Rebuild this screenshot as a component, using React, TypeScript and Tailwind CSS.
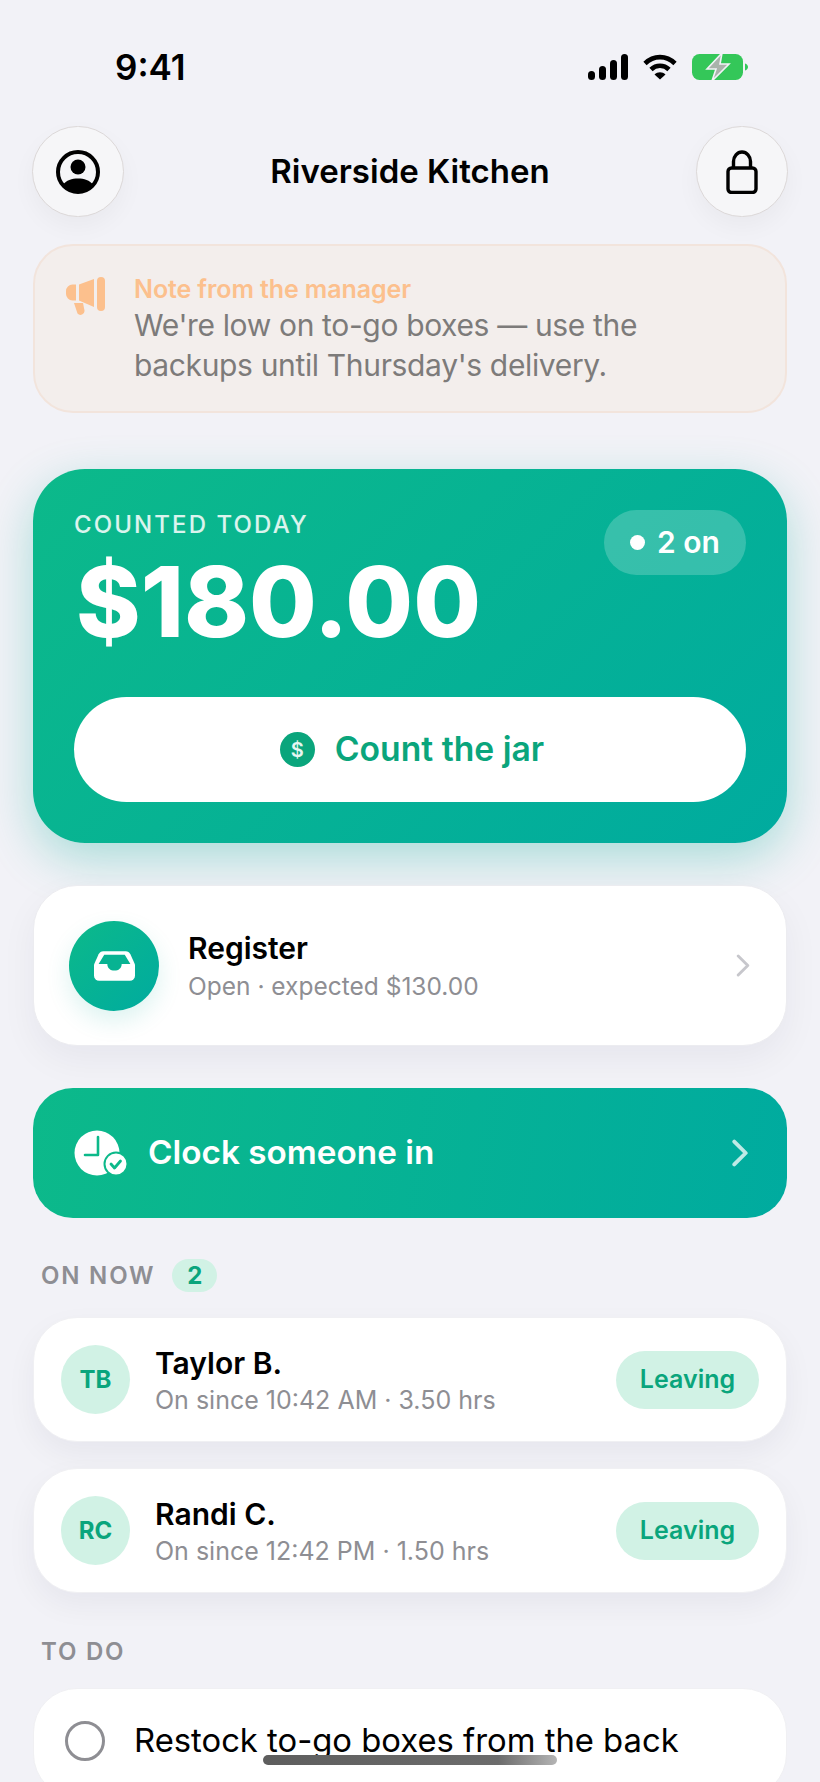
const ink = "#000000";

function SignalIcon() {
  return (
    <svg width="40" height="26" viewBox="0 0 40 26" fill={ink}>
      <rect x="0" y="17" width="7" height="9" rx="3.5" />
      <rect x="11" y="12" width="7" height="14" rx="3.5" />
      <rect x="22" y="6" width="7" height="20" rx="3.5" />
      <rect x="33" y="0" width="7" height="26" rx="3.5" />
    </svg>
  );
}

function WifiIcon() {
  return (
    <svg width="34" height="26" viewBox="0 0 34 26" fill="none" stroke={ink} strokeWidth="4.6">
      <path d="M2 9.5C10.5 1 23.5 1 32 9.5" />
      <path d="M8 15.5C13 10.5 21 10.5 26 15.5" />
      <path d="M17 25.5 L11.5 20.5C14.5 17.5 19.5 17.5 22.5 20.5Z" fill={ink} stroke="none" />
    </svg>
  );
}

function BatteryIcon() {
  return (
    <svg width="56" height="28" viewBox="0 0 56 28">
      <rect x="0" y="1" width="51" height="26" rx="7.5" fill="#34c759" />
      <path d="M53 10.5c2 .6 3 2 3 3.5s-1 2.9-3 3.5z" fill="#34c759" />
      <path d="M30 0 L15 16 H24 L20 28 L37 11 H28Z" fill="#a9b3ab" stroke="#f2f2f7" strokeWidth="1.6" />
    </svg>
  );
}

function StatusBar() {
  return (
    <div className="flex h-[122px] items-start justify-between pt-[47px] pl-[115px] pr-[72px]">
      <span className="text-[35px] leading-[40px] font-semibold text-black">9:41</span>
      <div className="mt-[6px] flex items-center gap-[15px]">
        <SignalIcon />
        <WifiIcon />
        <BatteryIcon />
      </div>
    </div>
  );
}

function ProfileIcon() {
  return (
    <svg width="44" height="44" viewBox="0 0 44 44">
      <circle cx="22" cy="22" r="20" fill="none" stroke="#000" strokeWidth="4" />
      <circle cx="22" cy="17" r="7.5" fill="#000" />
      <path d="M7 35C10 30 16 28.500 22 28.500S34 30 37 35A20 20 0 0 1 7 35z" fill="#000" />
    </svg>
  );
}

function LockIcon() {
  return (
    <svg width="32" height="44" viewBox="0 0 32 44" fill="none" stroke="#000" strokeWidth="3.400">
      <path d="M7.500 18V11.500a8.500 9.500 0 0 1 17 0V18" />
      <rect x="2" y="18" width="28" height="24.500" rx="3.500" />
    </svg>
  );
}

function RoundButton({ children }: { children: React.ReactNode }) {
  return (
    <div className="flex h-[91px] w-[92px] items-center justify-center rounded-full border border-[#dcd8d8] bg-[#f6f6f8] shadow-[0_10px_24px_rgba(0,0,0,0.04)]">
      {children}
    </div>
  );
}

function MegaphoneIcon() {
  return (
    <svg width="40" height="38" viewBox="0 0 40 38" fill="#fcc08d">
      <path d="M10 7.500H6.500A6.500 6.500 0 0 0 0 14v3a6.500 6.500 0 0 0 6.500 6.500H10z" />
      <path d="M13 7.500 28 2v28l-15-6.500z" />
      <rect x="31" y="0" width="8" height="34" rx="4" />
      <path d="M8 26h9l1.500 7.500a4 4 0 0 1-7 3z" />
    </svg>
  );
}

function ManagerNote() {
  return (
    <div className="flex h-[169px] gap-[28px] rounded-[40px] border-2 border-[#f2e4dc] bg-[#f3eeec] pt-[28px] pl-[31px]">
      <div className="pt-[3px]">
        <MegaphoneIcon />
      </div>
      <div>
        <div className="text-[25px] leading-[30px] font-semibold tracking-[-0.1px] text-[#fcc08d]">Note from the manager</div>
        <div className="mt-[1px] text-[30px] leading-[40px] tracking-[-0.35px] text-[#7d7b7a]">
          We're low on to-go boxes — use the
          <br />
          backups until Thursday's delivery.
        </div>
      </div>
    </div>
  );
}

function DollarCoin() {
  return (
    <div className="flex h-[35px] w-[35px] items-center justify-center rounded-full bg-[#0aa57c] text-[20px] font-semibold text-white/90">
      $
    </div>
  );
}

function HeroCard() {
  return (
    <div className="mt-[56px] h-[374px] rounded-[52px] bg-[linear-gradient(135deg,#0cb98a,#00ab9f)] px-[41px] shadow-[0_16px_48px_rgba(0,172,150,0.3)]">
      <div className="flex items-start justify-between">
        <div>
          <div className="mt-[41px] text-[24px] leading-[30px] font-medium tracking-[2.100px] text-white/85">COUNTED TODAY</div>
          <div className="mt-[6px] pl-[2px] text-[98px] leading-[112px] font-extrabold tracking-[0px] text-white">$180.00</div>
        </div>
        <div className="mt-[41px] flex h-[65px] w-[142px] items-center justify-center gap-[12px] rounded-full bg-white/20 text-[30px] font-semibold text-white">
          <span className="h-[15px] w-[15px] rounded-full bg-white" />
          2 on
        </div>
      </div>
      <div className="mt-[39px] flex h-[105px] items-center justify-center gap-[20px] rounded-full bg-white pl-[4px]">
        <DollarCoin />
        <span className="text-[33.700px] font-semibold text-[#0aa57c]">Count the jar</span>
      </div>
    </div>
  );
}

function Chevron({ stroke, width, height, weight }: { stroke: string; width: number; height: number; weight: number }) {
  return (
    <svg width={width} height={height} viewBox="0 0 14 24" fill="none" stroke={stroke} strokeWidth={weight} strokeLinecap="round" strokeLinejoin="round">
      <path d="M2 2l10 10L2 22" />
    </svg>
  );
}

function TrayIcon() {
  return (
    <svg width="41" height="30" viewBox="0 0 40 29">
      <path d="M9 0H31C33 0 34.500 1 35.500 3L40 13V24a5 5 0 0 1-5 5H5a5 5 0 0 1-5-5V13L4.500 3C5.500 1 7 0 9 0z" fill="#fff" />
      <path d="M10 3.500H30L35.500 12.500H27c0 4-3 6.500-7 6.500s-7-2.500-7-6.500H4.500z" fill="#07b392" />
    </svg>
  );
}

function RegisterCard() {
  return (
    <div className="mt-[42px] flex h-[161px] items-center rounded-[44px] border border-[#ececf0] bg-white pl-[35px] pr-[36px] shadow-[0_14px_36px_rgba(20,20,60,0.05)]">
      <div className="flex h-[90px] w-[90px] items-center justify-center rounded-full bg-[linear-gradient(135deg,#0cb98a,#00ab9f)] shadow-[0_10px_24px_rgba(0,172,150,0.14)]">
        <TrayIcon />
      </div>
      <div className="ml-[29px] flex-1">
        <div className="text-[30px] leading-[36px] font-semibold text-black">Register</div>
        <div className="mt-[5px] text-[24.500px] leading-[30px] text-[#8e8e93]">Open · expected $130.00</div>
      </div>
      <Chevron stroke="#c7c7cc" width={14} height={23} weight={3} />
    </div>
  );
}

function ClockCheckIcon() {
  return (
    <svg width="54" height="46" viewBox="0 0 54 46">
      <circle cx="23" cy="23" r="22.500" fill="#fff" />
      <path d="M24 7v18H11" fill="none" stroke="#0cb98a" strokeWidth="2.600" strokeLinecap="round" strokeLinejoin="round" />
      <circle cx="42" cy="34" r="11.500" fill="#fff" stroke="#0cb98a" strokeWidth="2" />
      <path d="M37 34l3.500 4 6-7" fill="none" stroke="#0cb98a" strokeWidth="2.800" strokeLinecap="round" strokeLinejoin="round" />
    </svg>
  );
}

function ClockInBar() {
  return (
    <div className="mt-[42px] flex h-[130px] items-center rounded-[40px] bg-[linear-gradient(100deg,#0cb98a,#00ab9f)] pl-[41px] pr-[39px]">
      <ClockCheckIcon />
      <span className="ml-[20px] flex-1 text-[33.300px] font-semibold text-white">Clock someone in</span>
      <Chevron stroke="rgba(255,255,255,0.75)" width={16} height={28} weight={3.4} />
    </div>
  );
}

function SectionLabel({ children }: { children: string }) {
  return <span className="text-[24px] leading-[30px] font-semibold tracking-[1.800px] text-[#8e8e93]">{children}</span>;
}

const staff = [
  { initials: "TB", name: "Taylor B.", since: "On since 10:42 AM · 3.50 hrs" },
  { initials: "RC", name: "Randi C.", since: "On since 12:42 PM · 1.50 hrs" },
];

function StaffRow({ initials, name, since }: { initials: string; name: string; since: string }) {
  return (
    <div className="flex h-[125px] items-center rounded-[44px] border border-[#f0f0f3] bg-white pl-[27px] pr-[27px] shadow-[0_12px_30px_rgba(20,20,60,0.05)]">
      <div className="flex h-[69px] w-[69px] items-center justify-center rounded-full bg-[#d1f2e5] text-[24px] font-bold text-[#0aa57c]">
        {initials}
      </div>
      <div className="ml-[25px] flex-1">
        <div className="text-[30px] leading-[36px] font-semibold text-black">{name}</div>
        <div className="mt-[4px] text-[25px] leading-[30px] text-[#8e8e93]">{since}</div>
      </div>
      <div className="flex h-[58px] w-[143px] items-center justify-center rounded-full bg-[#d1f2e5] text-[25px] font-semibold text-[#0aa57c]">
        Leaving
      </div>
    </div>
  );
}

export default function App() {
  return (
    <div className="relative h-[1782px] w-[820px] overflow-hidden bg-[#f2f2f7] font-['Inter',sans-serif]">
      <StatusBar />
      <div className="px-[33px]">
        <div className="-mx-px mt-[4px] flex items-center justify-between">
          <RoundButton>
            <ProfileIcon />
          </RoundButton>
          <span className="text-[33px] font-semibold text-black">Riverside Kitchen</span>
          <RoundButton>
            <LockIcon />
          </RoundButton>
        </div>

        <div className="mt-[27px]">
          <ManagerNote />
        </div>
        <HeroCard />
        <RegisterCard />
        <ClockInBar />

        <div className="mt-[41px] flex items-center gap-[17px] pl-[8px]">
          <SectionLabel>ON NOW</SectionLabel>
          <span className="flex h-[33px] w-[45px] items-center justify-center rounded-full bg-[#d1f2e5] text-[24px] font-bold text-[#0aa57c]">2</span>
        </div>

        <div className="mt-[25px] flex flex-col gap-[26px]">
          {staff.map((s) => (
            <StaffRow key={s.initials} {...s} />
          ))}
        </div>

        <div className="mt-[44px] pl-[8px]">
          <SectionLabel>TO DO</SectionLabel>
        </div>

        <div className="mt-[21px] flex h-[110px] items-start rounded-[44px] border border-[#f0f0f3] bg-white pt-[32px] pl-[31px]">
          <span className="h-[40px] w-[40px] rounded-full border-[3px] border-[#8e8e93]" />
          <span className="ml-[29px] text-[32.800px] leading-[38px] text-black">Restock to-go boxes from the back</span>
        </div>
      </div>

      <div className="absolute bottom-[17px] left-[263px] h-[10px] w-[294px] rounded-full bg-[linear-gradient(90deg,#5e5e5e,#6c6c6c_80%,#b4b4b4)]" />
    </div>
  );
}
